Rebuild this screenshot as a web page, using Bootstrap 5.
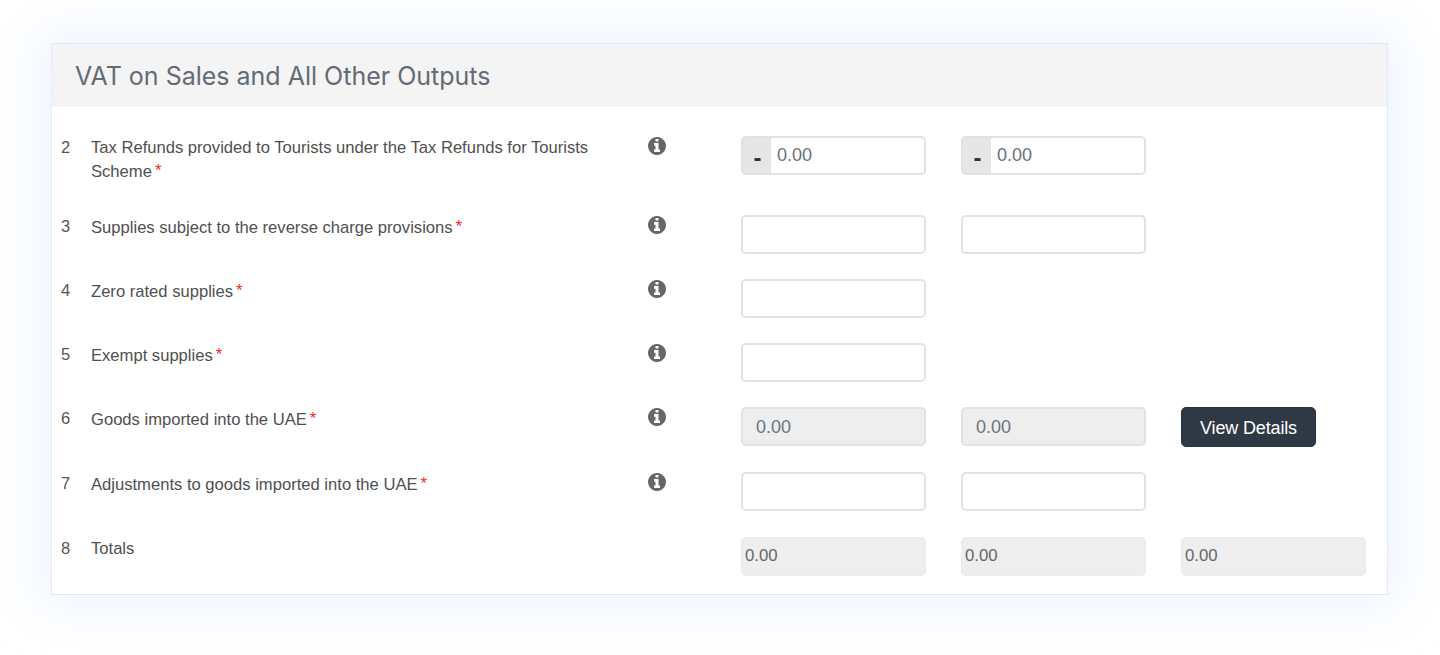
<!DOCTYPE html>
<html lang="en">
<head>
<meta charset="utf-8">
<title>VAT on Sales and All Other Outputs</title>
<link rel="stylesheet" href="https://cdn.jsdelivr.net/npm/bootstrap@5.3.0/dist/css/bootstrap.min.css">
<style>
html,body{height:655px;overflow:hidden;background:#fff}
body{padding:43px 52px 0 51px;font-family:"Liberation Sans",Arial,sans-serif;color:#555}
.vat-card{height:552px;border:1px solid #e2eaf8;border-left-color:#e6edfa;border-radius:0;box-shadow:0 0 50px 12px rgba(205,222,252,.36);background:#fff}
.vat-head{height:63px;background:#f4f4f4;border:0;border-radius:0!important;padding:0 23px;font-family:Inter,sans-serif;font-size:25px;line-height:64px;color:#636b75;white-space:nowrap}
.vat-body{padding:29px 21px 0 9px}
.vat-line{margin-bottom:25px}
.vat-line.first{margin-bottom:31px}
.vat-line.seventh{margin-bottom:26px}
.vat-num{width:30px;flex:none;font-size:16.5px;line-height:22px}
.vat-label{width:557px;flex:none;font-size:16.6px;line-height:24px;padding-right:50px;margin-top:1px;color:#4f4f4f}
.first .vat-label,.last-line .vat-label{margin-top:0}
.vat-req{color:#ef2b2b;font-size:17px;line-height:1;margin-left:3px;vertical-align:1px}
.vat-info{width:93px;flex:none;color:#666;line-height:0}
.vat-info svg{width:18px;height:18px;display:block;margin-top:1px}
.vat-cell{width:185px;flex:none;margin-right:35px}
.vat-input,.vat-input:disabled{height:39px;border:2px solid #e2e2e2;border-radius:5px;font-size:18px;color:#66717e;padding:0 13px;box-shadow:none;background-color:#fff}
.vat-input:disabled{background:#eee;opacity:1;border-color:#e2e2e2;color:#6a7480;padding-top:2px}
.vat-total,.vat-total:disabled{font-size:16.8px;padding:0 2px 2px;border-color:#ececec;color:#666}
.vat-group{height:39px;flex-wrap:nowrap}
.vat-group .input-group-text{width:31px;height:39px;padding:4px 0 0;justify-content:center;background:#e6e6e6;border:2px solid #e2e2e2;border-right:0;border-radius:5px 0 0 5px;color:#333;font-weight:700;font-size:24px}
.vat-group .vat-input{border-left:0;padding-left:6px;border-radius:0 5px 5px 0}
.vat-btn{width:135px;height:40px;padding:0;background:#2f3945;border:1px solid #2a333e;border-radius:5px;color:#fff;font-size:18px;line-height:40px;letter-spacing:-.15px}
.vat-btn:hover{background:#2f3945;color:#fff}
</style>
</head>
<body>
<div class="card vat-card">
  <div class="card-header vat-head">VAT on Sales and All Other Outputs</div>
  <div class="vat-body">

    <div class="d-flex vat-line first">
      <div class="vat-num">2</div>
      <div class="vat-label"><span class="d-block">Tax Refunds provided to Tourists under the Tax Refunds for Tourists</span><span>Scheme</span><span class="vat-req">*</span></div>
      <div class="vat-info"><svg viewBox="0 128 1536 1536" fill="currentColor"><path d="M1024 1376v-160q0-14-9-23t-23-9h-96v-512q0-14-9-23t-23-9h-320q-14 0-23 9t-9 23v160q0 14 9 23t23 9h96v320h-96q-14 0-23 9t-9 23v160q0 14 9 23t23 9h448q14 0 23-9t9-23zm-128-896v-160q0-14-9-23t-23-9h-192q-14 0-23 9t-9 23v160q0 14 9 23t23 9h192q14 0 23-9t9-23zm640 416q0 209-103 385.5t-279.5 279.5-385.5 103-385.5-103-279.5-279.5-103-385.5 103-385.5 279.5-279.5 385.5-103 385.5 103 279.5 279.5 103 385.5z"/></svg></div>
      <div class="vat-cell"><div class="input-group vat-group"><span class="input-group-text">-</span><input class="form-control vat-input" value="0.00"></div></div>
      <div class="vat-cell"><div class="input-group vat-group"><span class="input-group-text">-</span><input class="form-control vat-input" value="0.00"></div></div>
    </div>

    <div class="d-flex vat-line">
      <div class="vat-num">3</div>
      <div class="vat-label">Supplies subject to the reverse charge provisions<span class="vat-req">*</span></div>
      <div class="vat-info"><svg viewBox="0 128 1536 1536" fill="currentColor"><path d="M1024 1376v-160q0-14-9-23t-23-9h-96v-512q0-14-9-23t-23-9h-320q-14 0-23 9t-9 23v160q0 14 9 23t23 9h96v320h-96q-14 0-23 9t-9 23v160q0 14 9 23t23 9h448q14 0 23-9t9-23zm-128-896v-160q0-14-9-23t-23-9h-192q-14 0-23 9t-9 23v160q0 14 9 23t23 9h192q14 0 23-9t9-23zm640 416q0 209-103 385.5t-279.5 279.5-385.5 103-385.5-103-279.5-279.5-103-385.5 103-385.5 279.5-279.5 385.5-103 385.5 103 279.5 279.5 103 385.5z"/></svg></div>
      <div class="vat-cell"><input class="form-control vat-input"></div>
      <div class="vat-cell"><input class="form-control vat-input"></div>
    </div>

    <div class="d-flex vat-line">
      <div class="vat-num">4</div>
      <div class="vat-label">Zero rated supplies<span class="vat-req">*</span></div>
      <div class="vat-info"><svg viewBox="0 128 1536 1536" fill="currentColor"><path d="M1024 1376v-160q0-14-9-23t-23-9h-96v-512q0-14-9-23t-23-9h-320q-14 0-23 9t-9 23v160q0 14 9 23t23 9h96v320h-96q-14 0-23 9t-9 23v160q0 14 9 23t23 9h448q14 0 23-9t9-23zm-128-896v-160q0-14-9-23t-23-9h-192q-14 0-23 9t-9 23v160q0 14 9 23t23 9h192q14 0 23-9t9-23zm640 416q0 209-103 385.5t-279.5 279.5-385.5 103-385.5-103-279.5-279.5-103-385.5 103-385.5 279.5-279.5 385.5-103 385.5 103 279.5 279.5 103 385.5z"/></svg></div>
      <div class="vat-cell"><input class="form-control vat-input"></div>
    </div>

    <div class="d-flex vat-line">
      <div class="vat-num">5</div>
      <div class="vat-label">Exempt supplies<span class="vat-req">*</span></div>
      <div class="vat-info"><svg viewBox="0 128 1536 1536" fill="currentColor"><path d="M1024 1376v-160q0-14-9-23t-23-9h-96v-512q0-14-9-23t-23-9h-320q-14 0-23 9t-9 23v160q0 14 9 23t23 9h96v320h-96q-14 0-23 9t-9 23v160q0 14 9 23t23 9h448q14 0 23-9t9-23zm-128-896v-160q0-14-9-23t-23-9h-192q-14 0-23 9t-9 23v160q0 14 9 23t23 9h192q14 0 23-9t9-23zm640 416q0 209-103 385.5t-279.5 279.5-385.5 103-385.5-103-279.5-279.5-103-385.5 103-385.5 279.5-279.5 385.5-103 385.5 103 279.5 279.5 103 385.5z"/></svg></div>
      <div class="vat-cell"><input class="form-control vat-input"></div>
    </div>

    <div class="d-flex vat-line">
      <div class="vat-num">6</div>
      <div class="vat-label">Goods imported into the UAE<span class="vat-req">*</span></div>
      <div class="vat-info"><svg viewBox="0 128 1536 1536" fill="currentColor"><path d="M1024 1376v-160q0-14-9-23t-23-9h-96v-512q0-14-9-23t-23-9h-320q-14 0-23 9t-9 23v160q0 14 9 23t23 9h96v320h-96q-14 0-23 9t-9 23v160q0 14 9 23t23 9h448q14 0 23-9t9-23zm-128-896v-160q0-14-9-23t-23-9h-192q-14 0-23 9t-9 23v160q0 14 9 23t23 9h192q14 0 23-9t9-23zm640 416q0 209-103 385.5t-279.5 279.5-385.5 103-385.5-103-279.5-279.5-103-385.5 103-385.5 279.5-279.5 385.5-103 385.5 103 279.5 279.5 103 385.5z"/></svg></div>
      <div class="vat-cell"><input class="form-control vat-input" value="0.00" disabled></div>
      <div class="vat-cell"><input class="form-control vat-input" value="0.00" disabled></div>
      <div class="vat-cell"><button type="button" class="btn vat-btn">View Details</button></div>
    </div>

    <div class="d-flex vat-line seventh">
      <div class="vat-num">7</div>
      <div class="vat-label">Adjustments to goods imported into the UAE<span class="vat-req">*</span></div>
      <div class="vat-info"><svg viewBox="0 128 1536 1536" fill="currentColor"><path d="M1024 1376v-160q0-14-9-23t-23-9h-96v-512q0-14-9-23t-23-9h-320q-14 0-23 9t-9 23v160q0 14 9 23t23 9h96v320h-96q-14 0-23 9t-9 23v160q0 14 9 23t23 9h448q14 0 23-9t9-23zm-128-896v-160q0-14-9-23t-23-9h-192q-14 0-23 9t-9 23v160q0 14 9 23t23 9h192q14 0 23-9t9-23zm640 416q0 209-103 385.5t-279.5 279.5-385.5 103-385.5-103-279.5-279.5-103-385.5 103-385.5 279.5-279.5 385.5-103 385.5 103 279.5 279.5 103 385.5z"/></svg></div>
      <div class="vat-cell"><input class="form-control vat-input"></div>
      <div class="vat-cell"><input class="form-control vat-input"></div>
    </div>

    <div class="d-flex last-line">
      <div class="vat-num">8</div>
      <div class="vat-label">Totals</div>
      <div class="vat-info"></div>
      <div class="vat-cell"><input class="form-control vat-input vat-total" value="0.00" disabled></div>
      <div class="vat-cell"><input class="form-control vat-input vat-total" value="0.00" disabled></div>
      <div class="vat-cell"><input class="form-control vat-input vat-total" value="0.00" disabled></div>
    </div>

  </div>
</div>
<script src="https://cdn.jsdelivr.net/npm/bootstrap@5.3.0/dist/js/bootstrap.bundle.min.js"></script>
</body>
</html>
